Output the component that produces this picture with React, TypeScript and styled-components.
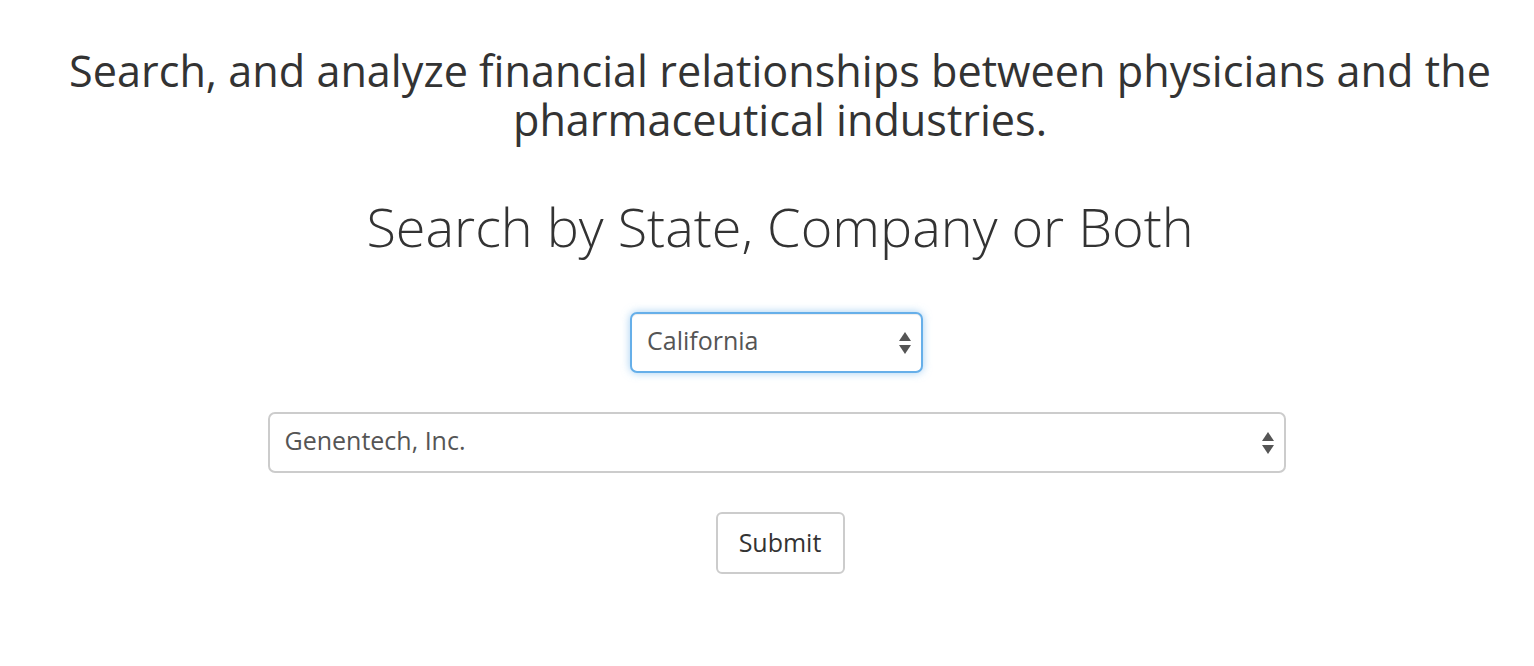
import React from "react";
import styled, { createGlobalStyle } from "styled-components";

const Global = createGlobalStyle`
  html, body { margin: 0; padding: 0; background: #fff; }
  body { font-family: "Open Sans", "Noto Sans", sans-serif; color: #333; }
`;

const Page = styled.main`
  display: flex;
  flex-direction: column;
  align-items: center;
  padding: 46px 0 0 26px;
`;

const Lead = styled.h1`
  margin: 0;
  width: 1460px;
  text-align: center;
  font-size: 43.2px;
  font-weight: 400;
  line-height: 49px;
  color: #333;
`;

const Title = styled.h2`
  margin: 48px 0 0;
  font-size: 54px;
  font-weight: 300;
  line-height: 68px;
  color: #333;
`;

const Form = styled.form`
  display: flex;
  flex-direction: column;
  align-items: center;
  gap: 39px;
  margin-top: 52px;
`;

const Fields = styled.div`
  display: flex;
  flex-direction: column;
  align-items: center;
  gap: 39px;
  padding-right: 7px;
`;

const SelectWrap = styled.div<{ $w: number }>`
  position: relative;
  width: ${(p) => p.$w}px;
`;

const Select = styled.select<{ $focus?: boolean }>`
  appearance: none;
  width: 100%;
  height: 61px;
  box-sizing: border-box;
  padding: 0 40px 5px 15px;
  font-family: "Open Sans", sans-serif;
  font-size: 25px;
  color: #555;
  background: #fff;
  border: 2px solid ${(p) => (p.$focus ? "#66afe9" : "#ccc")};
  border-radius: 7px;
  box-shadow: ${(p) =>
    p.$focus
      ? "inset 0 1px 1px rgba(0,0,0,.075), 0 0 8px rgba(102,175,233,.6)"
      : "none"};
  outline: none;
`;

const Arrows = styled.svg`
  position: absolute;
  right: 11px;
  top: 50%;
  transform: translateY(-50%);
  pointer-events: none;
`;

const Button = styled.button`
  width: 129px;
  height: 62px;
  padding-bottom: 3px;
  font-family: "Open Sans", sans-serif;
  font-size: 25px;
  color: #333;
  background: #fff;
  border: 2px solid #ccc;
  border-radius: 6px;
`;

function Chevrons() {
  return (
    <Arrows width="14" height="26" viewBox="0 0 14 26">
      <path d="M7 2 L13 11 L1 11 Z" fill="#555" />
      <path d="M1 15 L13 15 L7 24 Z" fill="#555" />
    </Arrows>
  );
}

export default function App() {
  return (
    <Page>
      <Global />
      <Lead>
        Search, and analyze financial relationships between physicians and the
        pharmaceutical industries.
      </Lead>
      <Title>Search by State, Company or Both</Title>
      <Form onSubmit={(e) => e.preventDefault()}>
        <Fields>
          <SelectWrap $w={293}>
            <Select $focus defaultValue="CA">
              <option value="CA">California</option>
            </Select>
            <Chevrons />
          </SelectWrap>
          <SelectWrap $w={1018}>
            <Select defaultValue="g">
              <option value="g">Genentech, Inc.</option>
            </Select>
            <Chevrons />
          </SelectWrap>
        </Fields>
        <Button type="submit">Submit</Button>
      </Form>
    </Page>
  );
}
